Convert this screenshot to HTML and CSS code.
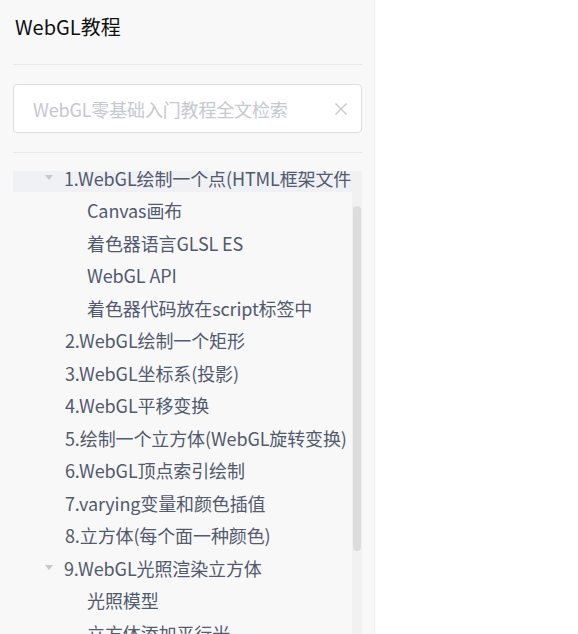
FILE: index.html
```html
<!DOCTYPE html>
<html lang="zh">
<head>
<meta charset="utf-8">
<link rel="stylesheet" href="styles.css">
</head>
<body>
<div class="page">
  <aside class="sidebar">
    <div class="title">WebGL教程</div>
    <div class="divider"></div>
    <div class="search">
      <span class="placeholder">WebGL零基础入门教程全文检索</span>
      <svg class="clear" width="14" height="14" viewBox="0 0 14 14"><path d="M1.5 1.5 L12.5 12.5 M12.5 1.5 L1.5 12.5" stroke="#c5c8ce" stroke-width="1.4" fill="none"/></svg>
    </div>
    <div class="divider divider-low"></div>
    <div class="tree">
      <div class="viewport">
        <ul class="list">
          <li class="row row-active"><span class="arrow"></span><span>1.WebGL绘制一个点(HTML框架文件</span></li>
          <li class="row sub">Canvas画布</li>
          <li class="row sub">着色器语言GLSL ES</li>
          <li class="row sub">WebGL API</li>
          <li class="row sub">着色器代码放在script标签中</li>
          <li class="row top">2.WebGL绘制一个矩形</li>
          <li class="row top">3.WebGL坐标系(投影)</li>
          <li class="row top">4.WebGL平移变换</li>
          <li class="row top">5.绘制一个立方体(WebGL旋转变换)</li>
          <li class="row top">6.WebGL顶点索引绘制</li>
          <li class="row top">7.varying变量和颜色插值</li>
          <li class="row top">8.立方体(每个面一种颜色)</li>
          <li class="row"><span class="arrow"></span><span>9.WebGL光照渲染立方体</span></li>
          <li class="row sub">光照模型</li>
          <li class="row sub">立方体添加平行光</li>
          <li class="row sub">立方体添加环境光</li>
        </ul>
      </div>
      <div class="scrollbar"><div class="thumb"></div></div>
    </div>
  </aside>
  <main class="content"></main>
</div>
</body>
</html>
```
FILE: styles.css
```css
html, body {
  margin: 0;
  padding: 0;
  height: 100%;
  overflow: hidden;
}
body {
  font-family: "Noto Sans CJK SC", sans-serif;
  background: #ffffff;
}
.page {
  display: flex;
  height: 634px;
}
.sidebar {
  width: 349px;
  padding: 0 12px 0 13px;
  background: #f8f8f9;
  border-right: 1px solid #eeeeee;
  display: flex;
  flex-direction: column;
  overflow: hidden;
}
.content {
  flex: 1;
  background: #fff;
}
.title {
  height: 64px;
  display: flex;
  align-items: center;
  padding-left: 2px;
  padding-bottom: 12px;
  box-sizing: border-box;
  font-size: 20px;
  color: #111;
}
.divider {
  height: 1px;
  background: #e6e7ea;
  flex-shrink: 0;
}
.search {
  margin: 19px 0 19px;
  height: 49px;
  box-sizing: border-box;
  border: 1px solid #dcdee2;
  border-radius: 4px;
  background: #fff;
  display: flex;
  align-items: center;
  padding: 0 13px 0 19px;
  flex-shrink: 0;
}
.placeholder {
  flex: 1;
  font-size: 18px;
  color: #c5c8ce;
  letter-spacing: -0.15px;
}
.clear {
  flex-shrink: 0;
}
.tree {
  margin-top: 18px;
  flex: 1;
  display: flex;
  min-height: 0;
}
.viewport {
  flex: 1;
  overflow: hidden;
}
.list {
  list-style: none;
  margin: -9.5px 0 0 0;
  padding: 0;
}
.row {
  height: 32.5px;
  line-height: 32.5px;
  font-size: 18px;
  letter-spacing: -0.12px;
  color: #515a6e;
  white-space: nowrap;
  overflow: hidden;
  padding-left: 52px;
  display: flex;
  align-items: center;
}
.row.sub {
  padding-left: 74px;
}
.row-active {
  background: linear-gradient(#f8f8f9 0, #f8f8f9 9.5px, #f0f1f4 9.5px, #f0f1f4 30px, #f8f8f9 30px);
}
.arrow {
  width: 0;
  height: 0;
  border-left: 4.5px solid transparent;
  border-right: 4.5px solid transparent;
  border-top: 5px solid #c5c8ce;
  margin-left: -20px;
  margin-right: 11px;
  flex-shrink: 0;
}
.scrollbar {
  width: 10px;
  flex-shrink: 0;
  background: #f1f1f1;
  padding-top: 35px;
  box-sizing: border-box;
  display: flex;
  justify-content: center;
}
.thumb {
  width: 8px;
  height: 345px;
  background: #dcdcdc;
  border-radius: 4px;
}
```
